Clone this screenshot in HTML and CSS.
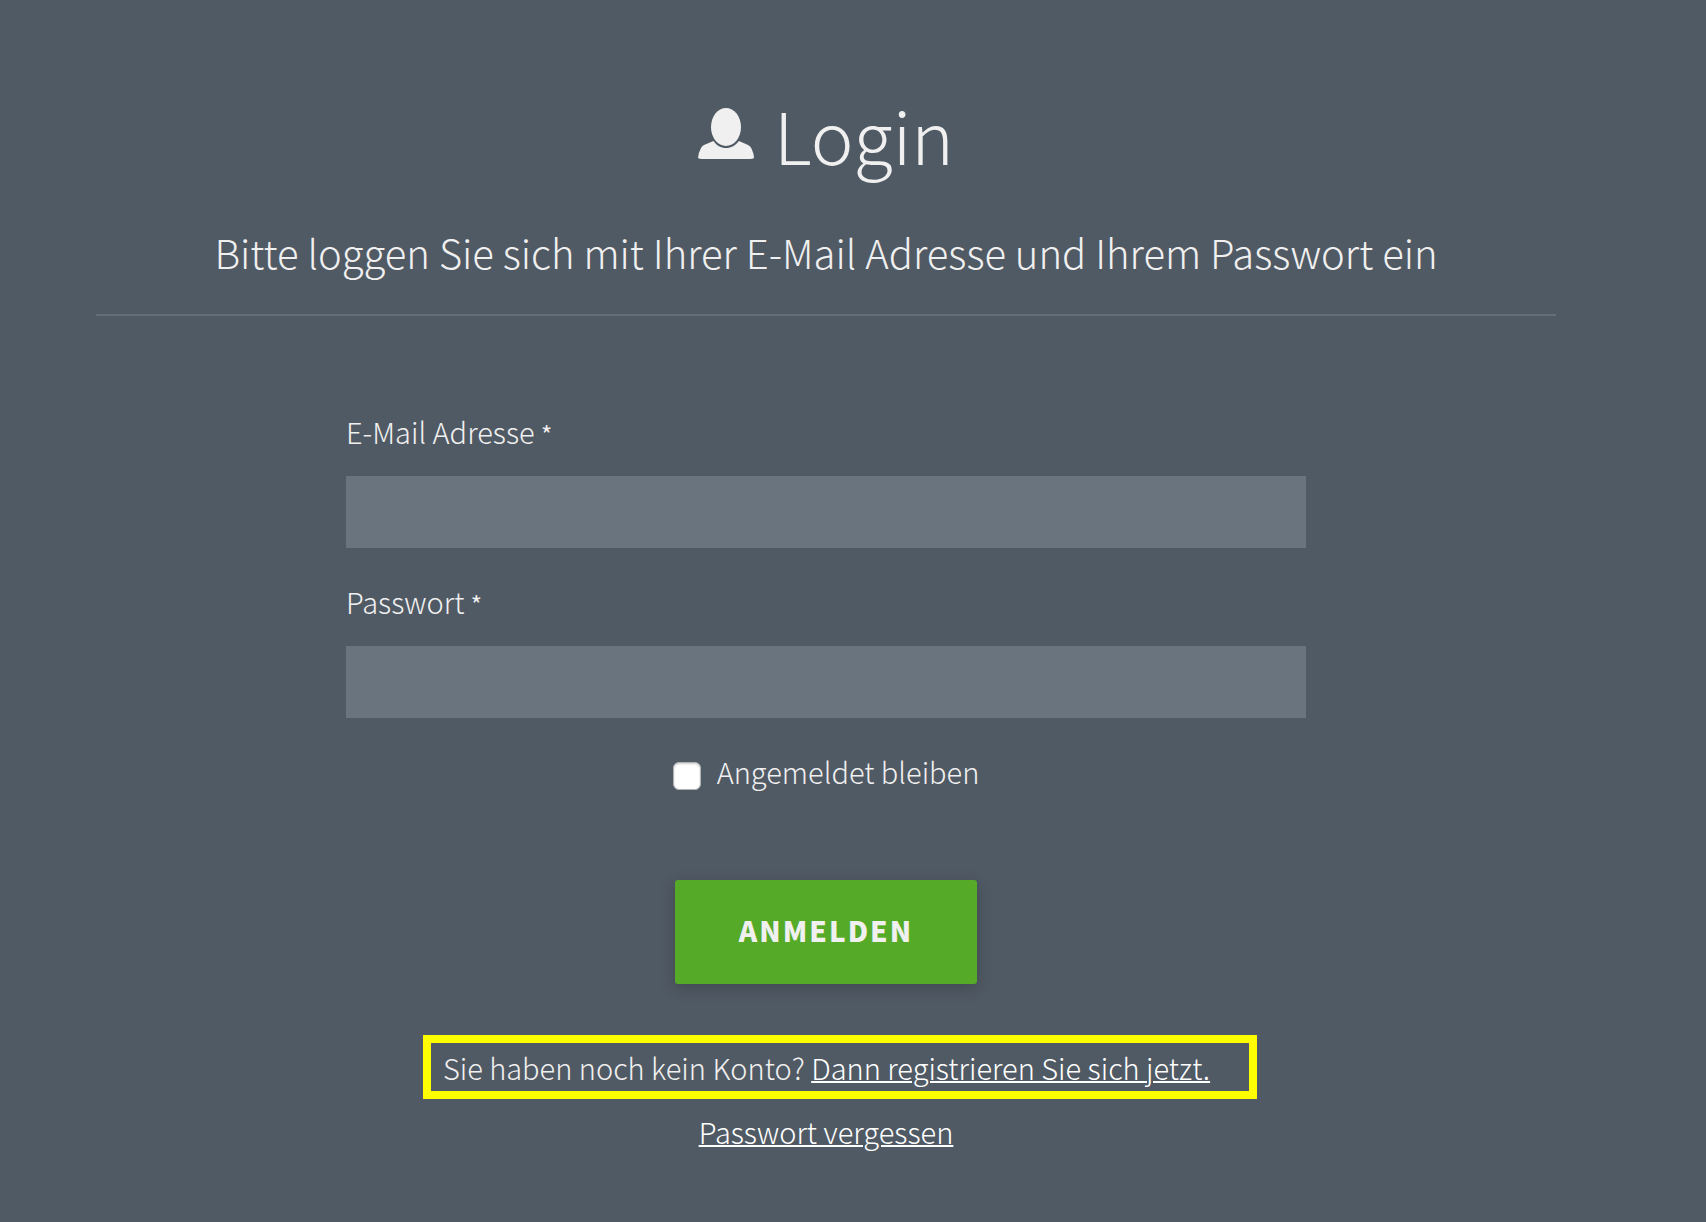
FILE: index.html
```html
<!DOCTYPE html>
<html lang="de">
<head>
  <meta charset="UTF-8">
  <meta name="viewport" content="width=device-width, initial-scale=1.0">
  <title>Login</title>
  <link rel="stylesheet" href="styles.css">
</head>
<body>
  <main class="login">
    <header class="login-header">
      <h1>
        <svg class="user-icon" viewBox="0 0 56 52" aria-hidden="true">
          <ellipse cx="28" cy="19" rx="15" ry="19"/>
          <path d="M15.500 33 C18.500 37.500 23 40 28 40 C33 40 37.500 37.500 41 33 L50 37 Q52.500 38.200 53.500 40.500 Q56 46 56 50 Q54.500 51 52 51 L4 51 Q1.500 51 0 50 Q0.500 44.500 3 40 Q4 38 6 37 Z"/>
        </svg>
        Login
      </h1>
      <p class="subtitle">Bitte loggen Sie sich mit Ihrer E-Mail Adresse und Ihrem Passwort ein</p>
    </header>

    <form class="login-form">
      <div class="field">
        <label for="email">E-Mail Adresse <span class="required">*</span></label>
        <input type="email" id="email" name="email" required>
      </div>
      <div class="field">
        <label for="password">Passwort <span class="required">*</span></label>
        <input type="password" id="password" name="password" required>
      </div>
      <div class="remember">
        <input type="checkbox" id="remember" name="remember">
        <label for="remember">Angemeldet bleiben</label>
      </div>
      <button type="submit">Anmelden</button>
    </form>

    <p class="register">Sie haben noch kein Konto? <a href="#">Dann registrieren Sie sich jetzt.</a></p>
    <p class="forgot"><a href="#">Passwort vergessen</a></p>
  </main>
</body>
</html>
```

FILE: styles.css
```css
* {
  box-sizing: border-box;
}
body {
  margin: 0;
  background-color: #505a64;
  color: #f0f0f0;
  font-family: "Noto Sans CJK SC", "Noto Sans", sans-serif;
  font-size: 29px;
  font-weight: 200;
  line-height: 48px;
}
h1, p {
  margin: 0;
  font-weight: 200;
}
a {
  color: #fff;
  text-decoration-thickness: 2px;
}
.login {
  display: flex;
  flex-direction: column;
  align-items: center;
  padding: 88px 150px 60px 96px;
}
.login-header {
  width: 100%;
  padding-bottom: 32px;
  border-bottom: 2px solid #646e78;
  text-align: center;
}
h1 {
  display: flex;
  justify-content: center;
  align-items: center;
  gap: 20px;
  font-size: 72px;
  line-height: 92px;
}
.user-icon {
  width: 56px;
  height: 52px;
  fill: #f0f0f0;
}
.subtitle {
  margin-top: 42px;
  font-size: 40px;
  line-height: 60px;
}
.login-form {
  display: flex;
  flex-direction: column;
  align-items: center;
  width: 100%;
  max-width: 960px;
  padding-top: 94px;
}
.field {
  width: 100%;
  margin-bottom: 32px;
}
.field label {
  display: block;
  margin-bottom: 24px;
  line-height: 42px;
}
.field input {
  display: block;
  width: 100%;
  height: 72px;
  padding: 0 20px;
  border: none;
  border-radius: 0;
  background-color: #6a747e;
  color: #f0f0f0;
  font: inherit;
}
.required {
  font-size: 24px;
  font-weight: 400;
  line-height: 1;
}
.remember {
  display: flex;
  align-items: center;
  gap: 16px;
  line-height: 42px;
}
.remember input {
  appearance: none;
  width: 28px;
  height: 28px;
  margin: 10px 0 0;
  border: 1px solid #b4b4b4;
  border-radius: 6px;
  background-color: #fff;
  box-shadow: inset 0 1px 2px rgba(0, 0, 0, 0.2);
}
.remember input:checked {
  background-color: #55aa28;
}
button {
  margin-top: 88px;
  padding: 26px 64px 30px;
  border: none;
  border-radius: 3px;
  background-color: #55aa28;
  box-shadow: 0 4px 16px rgba(0, 0, 0, 0.2);
  color: #f0f0f0;
  font: inherit;
  font-size: 28px;
  font-weight: 900;
  letter-spacing: 2px;
  text-transform: uppercase;
  cursor: pointer;
}
.register {
  margin: 51px 0 0 28px;
  padding: 0 39px 0 12px;
  border: 8px solid #ff0;
}
.forgot {
  margin-top: 8px;
}
```
